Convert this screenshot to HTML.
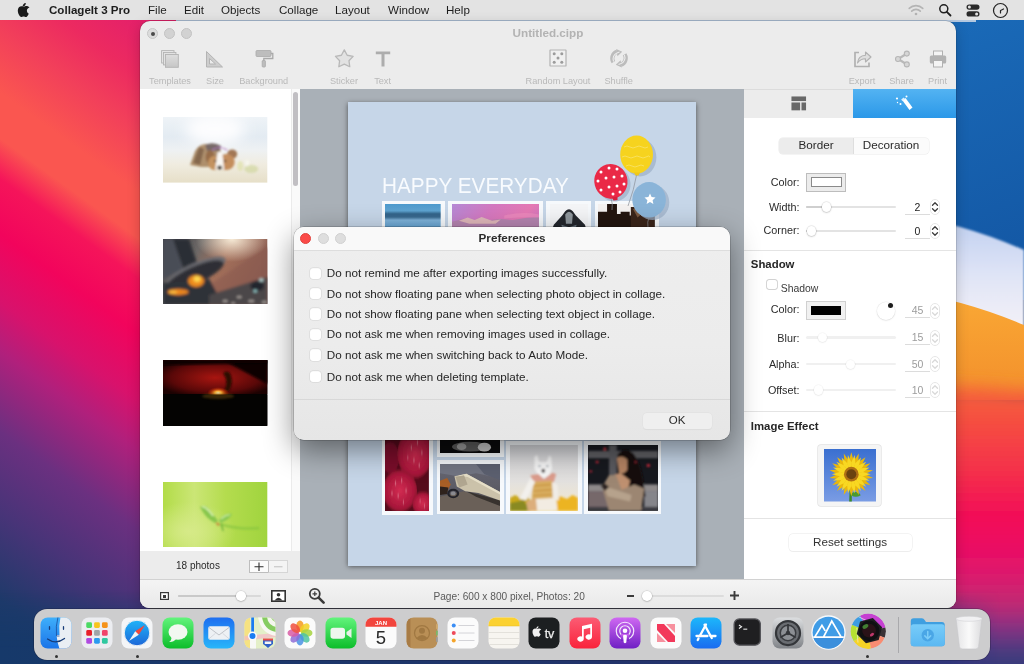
<!DOCTYPE html>
<html><head><meta charset="utf-8">
<style>
*{box-sizing:border-box;margin:0;padding:0}
html,body{width:1024px;height:664px;overflow:hidden}
body{font-family:"Liberation Sans",sans-serif;position:relative;background:#c02a6a;color:#222}
.abs{position:absolute}
#wall{position:absolute;left:0;top:0;width:1024px;height:664px}
#menubar{position:absolute;left:0;top:0;width:1024px;height:20px;background:#e3e3e3}
#menubar span{position:absolute;top:3px;font-size:11.6px;color:#1d1d1d;white-space:nowrap;line-height:14px}
#win{position:absolute;left:140px;top:21px;width:816px;height:587px;border-radius:10px 10px 9px 9px;background:#ececec;overflow:hidden;box-shadow:0 0 0 0.5px rgba(0,0,0,.22),0 4px 14px rgba(0,0,0,.2)}
.tl{position:absolute;width:11px;height:11px;border-radius:50%;background:#d2d2d2;border:0.5px solid #c2c2c2}
.tbl{position:absolute;top:53.5px;font-size:9.2px;color:#b9b9b9;white-space:nowrap;transform:translateX(-50%);line-height:12px}
.tbi{position:absolute}
#left{position:absolute;left:0;top:68px;width:160px;height:462px;background:#fff}
#canvas{position:absolute;left:160px;top:68px;width:444px;height:490px;background:#a9b0b7}
#page{position:absolute;left:48px;top:13px;width:348px;height:464px;background:#c6d6e8;box-shadow:0 0.5px 5px rgba(0,0,0,.55)}
.ph{position:absolute;background:#fff;border:3px solid #fff;overflow:hidden}
#right{position:absolute;left:604px;top:68px;width:212px;height:490px;background:#fff}
.lbl{position:absolute;font-size:11px;color:#2a2a2a;white-space:nowrap;line-height:14px}
.track{position:absolute;height:2.4px;margin-top:.3px;border-radius:2px;background:#e3e3e3}
.knob{position:absolute;width:9.400px;height:9.400px;margin:.8px;border-radius:50%;background:#fff;box-shadow:0 0 0 0.5px rgba(0,0,0,.09),0 0.5px 1.800px rgba(0,0,0,.26)}
.sep{position:absolute;left:0;width:212px;height:1px;background:#e4e4e4}
.num{position:absolute;width:25px;height:15px;font-size:10.5px;text-align:center;line-height:15px;border-bottom:1px solid #dcdcdc;color:#222;background:transparent}
.num.dis{color:#9c9c9c}
#dock{position:absolute;left:34px;top:609px;width:956px;height:51px;border-radius:13px;background:#cdcdce;box-shadow:0 0 0 0.6px rgba(20,20,40,.45)}
.di{position:absolute;top:7px;width:32px;height:32px;border-radius:7.5px;overflow:hidden}
.dot{position:absolute;top:45.5px;width:3px;height:3px;border-radius:50%;background:#333}
#dlg{position:absolute;left:294px;top:226.500px;width:436px;height:213px;border-radius:10px;background:linear-gradient(#eeeeee,#ececec 55%,#e6e6e6);overflow:hidden;box-shadow:0 0 0 0.5px rgba(0,0,0,.3),0 10px 30px rgba(0,0,0,.45)}
.cb{position:absolute;left:15.5px;width:11.5px;height:11.5px;border-radius:3px;background:#fff;box-shadow:0 0 0 0.5px rgba(0,0,0,.11),inset 0 0.5px 1px rgba(0,0,0,.05)}
.ct{position:absolute;left:32.8px;font-size:11.7px;color:#262626;white-space:nowrap;line-height:14px}
#menubar,#win,#dlg,#dock{opacity:.999}
</style></head><body>
<svg id="wall" viewBox="0 0 1024 664" preserveAspectRatio="none">
<defs>
<linearGradient id="wl" gradientUnits="userSpaceOnUse" x1="38.6" y1="-53.5" x2="-316" y2="438"><stop offset="0.000" stop-color="#e4206a"/><stop offset="0.076" stop-color="#ec2a60"/><stop offset="0.150" stop-color="#f2405a"/><stop offset="0.233" stop-color="#fa5650"/><stop offset="0.294" stop-color="#fa5650"/><stop offset="0.348" stop-color="#f5145a"/><stop offset="0.422" stop-color="#f2045c"/><stop offset="0.513" stop-color="#d8126c"/><stop offset="0.579" stop-color="#b0207c"/><stop offset="0.686" stop-color="#6b3080"/><stop offset="0.794" stop-color="#483478"/><stop offset="0.911" stop-color="#1f3a6a"/><stop offset="1.000" stop-color="#173966"/></linearGradient>
<filter id="b8"><feGaussianBlur stdDeviation="8"/></filter>
<filter id="b3"><feGaussianBlur stdDeviation="3"/></filter><filter id="b1"><feGaussianBlur stdDeviation=".8"/></filter>
</defs>
<rect width="1024" height="664" fill="#1b3a68"/>
<rect x="0" y="0" width="520" height="664" fill="url(#wl)"/>
<g id="wr">
<linearGradient id="wrb" gradientUnits="userSpaceOnUse" x1="940" y1="20" x2="1024" y2="240"><stop offset="0" stop-color="#1a6ab8"/><stop offset="1" stop-color="#1459a6"/></linearGradient>
<linearGradient id="wrw" gradientUnits="userSpaceOnUse" x1="0" y1="225" x2="0" y2="325"><stop offset="0" stop-color="#c3d2f1"/><stop offset=".5" stop-color="#dfe4f6"/><stop offset="1" stop-color="#f2f0f8"/></linearGradient>
<linearGradient id="wro" gradientUnits="userSpaceOnUse" x1="0" y1="300" x2="0" y2="395"><stop offset="0" stop-color="#f9a734"/><stop offset="1" stop-color="#f3902c"/></linearGradient>
<linearGradient id="wrr" gradientUnits="userSpaceOnUse" x1="0" y1="388" x2="0" y2="664"><stop offset="0" stop-color="#f5623a"/><stop offset=".3" stop-color="#f4304a"/><stop offset=".5" stop-color="#f2055a"/><stop offset=".66" stop-color="#e0166c"/><stop offset=".78" stop-color="#c22a72"/><stop offset=".86" stop-color="#8c3082"/><stop offset=".94" stop-color="#503a80"/><stop offset="1" stop-color="#363a7a"/></linearGradient>
<rect x="900" y="0" width="124" height="300" fill="url(#wrb)"/>
<path d="M900 215 Q960 222 1024 250 L1024 340 L900 340Z" fill="url(#wrw)" filter="url(#b1)"/>
<path d="M900 290 Q965 300 1024 325 L1024 400 L900 400Z" fill="url(#wro)"/>
<path d="M880 386 Q965 384 1060 394 L1060 700 L880 700Z" fill="url(#wrr)" filter="url(#b8)"/>
</g>
<linearGradient id="nv" gradientUnits="userSpaceOnUse" x1="0" y1="590" x2="0" y2="648"><stop offset="0" stop-color="#fff" stop-opacity="0"/><stop offset="1" stop-color="#fff"/></linearGradient><linearGradient id="nvh" gradientUnits="userSpaceOnUse" x1="0" y1="0" x2="1024" y2="0"><stop offset="0" stop-color="#16396a"/><stop offset=".6" stop-color="#22336a"/><stop offset=".93" stop-color="#30357a"/><stop offset="1" stop-color="#3c3a80"/></linearGradient><linearGradient id="nvk" gradientUnits="userSpaceOnUse" x1="950" y1="0" x2="1000" y2="0"><stop offset="0" stop-color="#000" stop-opacity="0"/><stop offset="1" stop-color="#000" stop-opacity="1"/></linearGradient><mask id="nvm"><rect x="0" y="590" width="1024" height="80" fill="url(#nv)"/><rect x="950" y="590" width="74" height="80" fill="url(#nvk)"/></mask>
<rect x="0" y="590" width="1024" height="74" fill="url(#nvh)" mask="url(#nvm)"/><rect x="150" y="604" width="800" height="8" fill="#4a4a50"/><rect x="176" y="19" width="800" height="3" fill="#b4c8e0"/>
</svg>
<div id="menubar">
<svg class="abs" style="left:17px;top:3px" width="13" height="15" viewBox="0 0 170 200"><path fill="#1a1a1a" d="M150 68c-1 1-20 11-20 35 0 27 24 37 25 37 0 1-4 13-12 25-8 11-16 22-28 22s-15-7-29-7c-14 0-19 7-30 7s-19-10-28-23C18 149 9 124 9 100c0-38 25-58 49-58 13 0 24 8 32 8 8 0 20-9 35-9 6 0 26 1 40 20zM105 32c6-7 10-17 10-27 0-1 0-3-1-4-10 0-22 7-29 15-6 6-11 16-11 26 0 2 0 3 1 4h3c9 0 20-6 27-14z"/></svg>
<span style="left:49px;font-weight:700">CollageIt 3 Pro</span>
<span style="left:148px">File</span><span style="left:184px">Edit</span><span style="left:221px">Objects</span><span style="left:279px">Collage</span><span style="left:335px">Layout</span><span style="left:388px">Window</span><span style="left:446px">Help</span>
<svg class="abs" style="left:907px;top:3px" width="18" height="14" viewBox="0 0 18 14"><g fill="none" stroke="#b4b4b4" stroke-width="1.6" stroke-linecap="round"><path d="M2.200 5.400a9.600 9.600 0 0 1 13.600 0"/><path d="M4.700 8.100a6.100 6.100 0 0 1 8.600 0"/></g><circle cx="9" cy="11" r="1.300" fill="#b4b4b4"/></svg>
<svg class="abs" style="left:938px;top:3px" width="14" height="14" viewBox="0 0 14 14"><circle cx="5.800" cy="5.800" r="4" fill="none" stroke="#1f1f1f" stroke-width="1.500"/><path d="M8.800 8.800l3.700 3.700" stroke="#1f1f1f" stroke-width="1.800" stroke-linecap="round"/></svg>
<svg class="abs" style="left:966px;top:4px" width="14" height="13" viewBox="0 0 14 13"><rect x=".5" y=".5" width="13" height="5.200" rx="2.600" fill="#2a2a2a"/><circle cx="3.400" cy="3.100" r="1.500" fill="#e3e3e3"/><rect x=".5" y="7.300" width="13" height="5.200" rx="2.600" fill="#2a2a2a"/><circle cx="10.600" cy="9.900" r="1.500" fill="#e3e3e3"/></svg>
<svg class="abs" style="left:992px;top:2px" width="17" height="17" viewBox="0 0 17 17"><circle cx="8.500" cy="8.500" r="7" fill="none" stroke="#222" stroke-width="1.200"/><path d="M8.500 11V8.500l3-1.500" fill="none" stroke="#222" stroke-width="1.200" stroke-linecap="round"/></svg>
</div>
<div id="win">

<div class="tl" style="left:6.5px;top:6.500px;background:#dcdcdc;border-color:#c6c6c6"><div class="abs" style="left:3px;top:3px;width:4px;height:4px;border-radius:50%;background:#4a4a4a"></div></div>
<div class="tl" style="left:23.5px;top:6.500px"></div>
<div class="tl" style="left:40.500px;top:6.500px"></div>
<div class="abs" style="left:0;top:5px;width:816px;text-align:center;font-size:11.7px;font-weight:700;color:#b3b3b3;line-height:14px">Untitled.cipp</div>
<!-- templates -->
<svg class="tbi" style="left:21px;top:28.500px" width="18" height="18" viewBox="0 0 18 18"><defs><linearGradient id="tpg" x1="0" y1="0" x2="0" y2="1"><stop offset="0" stop-color="#dedede"/><stop offset="1" stop-color="#c6c6c6"/></linearGradient></defs><g stroke="#b3b3b3" stroke-width=".9"><rect x=".6" y=".6" width="12.400" height="12.400" fill="#e6e6e6"/><rect x="2.500" y="2.500" width="12.400" height="12.400" fill="#e2e2e2"/><rect x="4.500" y="4.500" width="12.800" height="12.800" fill="url(#tpg)"/></g></svg>
<!-- size -->
<svg class="tbi" style="left:65px;top:29px" width="19" height="18" viewBox="0 0 19 18"><path d="M1.500 1.500 L17.500 17 L1.500 17Z M4.500 8.500 L4.500 14 L10.500 14Z" fill="#cdcdcd" fill-rule="evenodd" stroke="#b3b3b3" stroke-width="1" stroke-linejoin="round"/></svg>
<!-- background roller -->
<svg class="tbi" style="left:115px;top:28px" width="19" height="19" viewBox="0 0 19 19"><g fill="#bdbdbd" stroke="#a9a9a9" stroke-width=".8"><rect x="1" y="1.500" width="15" height="6" rx="1"/><path d="M16 4.500h1.800v5h-9v2.500" fill="none" stroke-width="1.300"/><rect x="7.200" y="11.500" width="3.200" height="6.500" rx=".8"/></g></svg>
<!-- sticker star -->
<svg class="tbi" style="left:193.500px;top:26.500px" width="21" height="21" viewBox="0 0 21 21"><path d="M10.30 1.90 L13.18 7.24 L19.14 8.33 L14.96 12.71 L15.77 18.72 L10.30 16.10 L4.83 18.72 L5.64 12.71 L1.46 8.33 L7.42 7.24Z" fill="#e2e2e2" stroke="#b8b8b8" stroke-width="1.300" stroke-linejoin="round"/></svg>
<!-- text T -->
<svg class="tbi" style="left:235px;top:29.500px" width="16" height="17" viewBox="0 0 16 17"><path d="M.8.500h14.400v2.700H9.500V15.500H6.500V3.200H.8z" fill="#adadad"/></svg>
<!-- random layout dice -->
<svg class="tbi" style="left:408.800px;top:28px" width="18" height="18" viewBox="0 0 18 18"><rect x="1" y="1" width="16" height="16" rx=".3" fill="#f0f0f0" stroke="#b3b3b3" stroke-width="1.200"/><g fill="#9c9c9c"><circle cx="5.200" cy="4.800" r="1.500"/><circle cx="12.800" cy="4.800" r="1.500"/><circle cx="9" cy="9" r="1.500"/><circle cx="5.200" cy="13.200" r="1.500"/><circle cx="12.800" cy="13.200" r="1.500"/></g></svg>
<!-- shuffle -->
<svg class="tbi" style="left:469.500px;top:28px" width="18" height="18.500" viewBox="0 0 18 18.500"><g fill="none" stroke="#bcbcbc" stroke-width="4.200"><path d="M3.400 13.200a6.300 6.800 0 0 1 3.600 -10.400"/><path d="M14.600 5.300a6.300 6.800 0 0 1 -3.600 10.400"/></g><path d="M6.200 0l6 2.800-4.800 4.400z" fill="#bcbcbc"/><path d="M11.800 18.500l-6-2.800 4.800-4.400z" fill="#bcbcbc"/><g fill="none" stroke="#ececec" stroke-width="1.100"><path d="M3.600 12.500a5.800 6.300 0 0 1 3.400 -8.600l2.500-.8"/><path d="M14.400 6a5.800 6.300 0 0 1 -3.400 8.600l-2.500.8"/></g></svg>
<!-- export -->
<svg class="tbi" style="left:713px;top:29px" width="19" height="18" viewBox="0 0 19 18"><path d="M6 2.500H2v14h14v-4" fill="none" stroke="#b1b1b1" stroke-width="1.700"/><path d="M4.500 13c.5-5 3.500-7.500 8-7.700V2l5.500 5-5.500 5V8.700c-3.500 0-6 1.200-8 4.300z" fill="#dedede" stroke="#b1b1b1" stroke-width="1.100" stroke-linejoin="round"/></svg>
<!-- share -->
<svg class="tbi" style="left:754px;top:29px" width="17" height="18" viewBox="0 0 17 18"><g stroke="#b9b9b9" stroke-width="2.200" fill="none"><path d="M12.500 3.800L4.200 9l8.300 5.200"/></g><g fill="#d6d6d6" stroke="#b6b6b6" stroke-width="1.100"><circle cx="12.800" cy="3.600" r="2.500"/><circle cx="4" cy="9" r="2.500"/><circle cx="12.800" cy="14.400" r="2.500"/></g></svg>
<!-- print -->
<svg class="tbi" style="left:788.500px;top:29px" width="18" height="18" viewBox="0 0 18 18"><rect x="4.500" y="1" width="9" height="5" fill="#f4f4f4" stroke="#b0b0b0" stroke-width="1"/><rect x=".8" y="5.500" width="16.400" height="8" rx="1.500" fill="#b2b2b2"/><rect x="4.500" y="10.500" width="9" height="6.500" fill="#f4f4f4" stroke="#b0b0b0" stroke-width="1"/></svg>
<div class="tbl" style="left:30px">Templates</div><div class="tbl" style="left:75px">Size</div><div class="tbl" style="left:123.7px">Background</div><div class="tbl" style="left:204px">Sticker</div><div class="tbl" style="left:242.6px">Text</div><div class="tbl" style="left:418px">Random Layout</div><div class="tbl" style="left:478.7px">Shuffle</div><div class="tbl" style="left:722px">Export</div><div class="tbl" style="left:761.5px">Share</div><div class="tbl" style="left:797.5px">Print</div>
<div id="left">
<svg class="abs" style="left:23.300px;top:28.200px" width="104.300" height="65.600" viewBox="0 0 104 65.600" preserveAspectRatio="none">
<defs><linearGradient id="t1" x1="0" y1="0" x2="0" y2="1"><stop offset="0" stop-color="#eef3f7"/><stop offset=".3" stop-color="#e3ebf2"/><stop offset=".5" stop-color="#eef1f3"/><stop offset=".72" stop-color="#f0ece0"/><stop offset="1" stop-color="#e6dfc8"/></linearGradient><filter id="f1" x="-20%" y="-20%" width="140%" height="140%"><feGaussianBlur stdDeviation="1.100"/></filter><filter id="f1b" x="-50%" y="-50%" width="200%" height="200%"><feGaussianBlur stdDeviation="7"/></filter></defs>
<rect width="104" height="65.600" fill="url(#t1)"/>
<ellipse cx="52" cy="12" rx="30" ry="16" fill="#fdfdfe" filter="url(#f1b)"/><g filter="url(#f1)" opacity=".9"><path d="M27 48 L32 34 Q36 27 43 27 L56 30 L60 40 L56 50 L38 50Z" fill="#a88660"/><path d="M30 46 L36 30 L41 32 L37 48Z" fill="#7a5a3c"/><path d="M42 28 Q50 24 58 29 L56 34 L44 34Z" fill="#6a5a58"/><ellipse cx="47" cy="40" rx="4.500" ry="7" fill="#8d5e38"/><ellipse cx="69" cy="37" rx="5" ry="4.500" fill="#9a6a44"/><ellipse cx="63" cy="45" rx="8.500" ry="8" fill="#c08450"/><ellipse cx="51" cy="46" rx="6" ry="7" fill="#c08a52"/><path d="M54.500 35 L59 35 L61 52 L52 52Z" fill="#faf8f4"/><ellipse cx="56.500" cy="50.500" rx="2.600" ry="2" fill="#3a302c"/><ellipse cx="52" cy="44" rx="1.200" ry="1" fill="#3a2a20"/><ellipse cx="62" cy="44" rx="1.200" ry="1" fill="#3a2a20"/><path d="M49 33 Q56 28 64 33" fill="none" stroke="#b070b8" stroke-width="1.200"/><ellipse cx="88" cy="52" rx="7" ry="4" fill="#cfd69a" opacity=".7"/><ellipse cx="77" cy="49" rx="3" ry="5" fill="#dde0a4" opacity=".7"/><ellipse cx="84" cy="46" rx="2" ry="3" fill="#f8f8f0" opacity=".9"/></g>
</svg>
<svg class="abs" style="left:23.300px;top:149.500px" width="104.300" height="65.600" viewBox="0 0 104 65.600" preserveAspectRatio="none">
<defs><linearGradient id="t2" x1="0" y1="0" x2="1" y2=".35"><stop offset="0" stop-color="#3d4048"/><stop offset=".35" stop-color="#6d6866"/><stop offset=".6" stop-color="#a4705a"/><stop offset="1" stop-color="#8a5c52"/></linearGradient><filter id="f2" x="-20%" y="-20%" width="140%" height="140%"><feGaussianBlur stdDeviation="1.600"/></filter><radialGradient id="t2s" cx=".66" cy="0" r=".35"><stop offset="0" stop-color="#f6ead6"/><stop offset="1" stop-color="#f6ead6" stop-opacity="0"/></radialGradient></defs>
<rect width="104" height="65.600" fill="url(#t2)"/><rect width="104" height="65.600" fill="url(#t2s)"/>
<g filter="url(#f2)"><path d="M104 8 L40 50 L60 66 L104 40Z" fill="#8c5a50" opacity=".6"/><path d="M9 0 L26 0 L36 30 L22 34Z" fill="#2b2d35"/><path d="M0 0 L10 0 L20 30 L0 40Z" fill="#4a4d57"/><ellipse cx="33" cy="33" rx="32" ry="9" fill="#6c6c72" transform="rotate(-24 33 33)"/><ellipse cx="32" cy="36" rx="31" ry="8.500" fill="#2e2f35" transform="rotate(-24 32 36)"/><path d="M0 44 L46 40 L60 66 L0 66Z" fill="#2f3037"/><path d="M46 56 L104 38 L104 66 L46 66Z" fill="#4b4648"/><ellipse cx="33" cy="42" rx="8" ry="6" fill="#ee8c1c"/><ellipse cx="34" cy="40" rx="3.500" ry="3" fill="#ffd850"/><ellipse cx="15" cy="53" rx="10.500" ry="3" fill="#ec861e"/><ellipse cx="10" cy="53" rx="4" ry="1.600" fill="#ffc040"/><ellipse cx="94" cy="47" rx="7" ry="5" fill="#23272d"/><ellipse cx="98" cy="41" rx="2" ry="1.500" fill="#c8f0f0"/><ellipse cx="92" cy="52" rx="1.600" ry="1.200" fill="#a8e8e8"/></g>
<g filter="url(#f1)" fill="#9a938e" opacity=".75"><ellipse cx="62" cy="62" rx="3" ry="2"/><ellipse cx="76" cy="58" rx="3" ry="2"/><ellipse cx="88" cy="62" rx="3.500" ry="2"/><ellipse cx="101" cy="63" rx="3" ry="2"/><ellipse cx="70" cy="64" rx="2.500" ry="1.500"/></g>
</svg>
<svg class="abs" style="left:23.300px;top:271px" width="104.300" height="65.600" viewBox="0 0 104 65.600" preserveAspectRatio="none">
<defs><radialGradient id="t3" cx=".5" cy=".52" r=".6"><stop offset="0" stop-color="#a81510"/><stop offset=".3" stop-color="#86100d"/><stop offset=".7" stop-color="#5a0808"/><stop offset="1" stop-color="#1c0202"/></radialGradient><radialGradient id="t3s" cx=".5" cy=".5" r=".5"><stop offset="0" stop-color="#fff6c0"/><stop offset=".3" stop-color="#ffb43a"/><stop offset=".65" stop-color="#e0500a" stop-opacity=".55"/><stop offset="1" stop-color="#c02000" stop-opacity="0"/></radialGradient><filter id="f3" x="-20%" y="-20%" width="140%" height="140%"><feGaussianBlur stdDeviation="1.200"/></filter></defs>
<rect width="104" height="65.600" fill="#050303"/><rect width="104" height="34" fill="url(#t3)"/>
<path d="M60 0 L104 0 L104 24Z" fill="#0a0101" filter="url(#f3)"/><path d="M0 0 L104 0 L104 3 L0 5Z" fill="#0a0101" filter="url(#f3)"/>
<path d="M60 13 Q66 9 68 16 Q70 24 66 31 L61 31 Q66 22 60 13Z" fill="#2a0a05" filter="url(#f3)"/>
<ellipse cx="55" cy="33" rx="11" ry="6" fill="url(#t3s)"/>
<rect y="34.500" width="104" height="32" fill="#040302"/><ellipse cx="55" cy="36" rx="16" ry="3" fill="#6a4a10" opacity=".5" filter="url(#f3)"/>
</svg>
<svg class="abs" style="left:23.300px;top:392.500px" width="104.300" height="65.600" viewBox="0 0 104 65.600" preserveAspectRatio="none">
<defs><linearGradient id="t4" x1="0" y1="0" x2="1" y2="0"><stop offset="0" stop-color="#b2dc48"/><stop offset=".3" stop-color="#cbe676"/><stop offset=".6" stop-color="#b4dc4e"/><stop offset="1" stop-color="#a0d43e"/></linearGradient><filter id="f4" x="-20%" y="-20%" width="140%" height="140%"><feGaussianBlur stdDeviation=".800"/></filter><radialGradient id="t4b" cx=".25" cy=".75" r=".45"><stop offset="0" stop-color="#d6ea88"/><stop offset="1" stop-color="#d6ea88" stop-opacity="0"/></radialGradient></defs>
<rect width="104" height="65.600" fill="url(#t4)"/><rect width="104" height="65.600" fill="url(#t4b)"/>
<g filter="url(#f4)"><path d="M37 25 Q42 22 46 27 L55 39 L52 41 Q42 36 37 25Z" fill="#86c64c"/><path d="M39 25 Q43 24 50 34" stroke="#d8f2b0" stroke-width="1.800" fill="none"/><path d="M56 38 Q62 30 69 32 Q66 38 57 41Z" fill="#88c850"/><path d="M58 37 Q63 32 67 33" stroke="#d0eea8" stroke-width="1.200" fill="none"/><path d="M52 40 L57 42 L55 44Z" fill="#c87838"/><path d="M57 42 Q75 48 96 46" stroke="#86c440" stroke-width="2.500" fill="none" opacity=".7"/><path d="M58 42 L60 49" stroke="#62aa34" stroke-width="1.200"/></g>
</svg>
<div class="abs" style="left:151px;top:0;width:9px;height:462px;background:#fafafa;border-left:1px solid #ebebeb"></div>
<div class="abs" style="left:152.800px;top:2.500px;width:5px;height:94px;border-radius:3px;background:#c1bfc3"></div>
</div>
<div class="abs" style="left:0;top:530px;width:160px;height:28px;background:#ececec"></div>
<div class="lbl" style="left:36px;top:538px;font-size:10px;color:#2a2a2a">18 photos</div>
<div class="abs" style="left:108.500px;top:538.500px;width:20px;height:13.500px;background:#fbfbfb;border:1px solid #bdbdbd"></div>
<div class="abs" style="left:127.500px;top:538.500px;width:20px;height:13.500px;background:#f4f4f4;border:1px solid #d6d6d6;border-left:1px solid #bdbdbd"></div>
<svg class="abs" style="left:108.500px;top:538.500px" width="39" height="13.500" viewBox="0 0 39 13.500"><path d="M5.500 6.750h9M10 2.500v8.500" stroke="#2d2d2d" stroke-width="1.100"/><path d="M25 6.750h8.500" stroke="#c4c4c4" stroke-width="1.100"/></svg>
 <div id="canvas"><div id="page"><div class="abs" style="left:33.700px;top:71.500px;font-size:21.300px;line-height:24px;color:#f8fbfe;white-space:nowrap;transform:scaleX(.974);transform-origin:0 0">HAPPY EVERYDAY</div><div class="abs" style="left:33.5px;top:98.6px;width:63.1px;height:59.4px;background:#f6f9fc"><svg class="abs" style="left:3.7px;top:3.7px" width="55.7" height="52.0" viewBox="0 0 100 100" preserveAspectRatio="none"><defs><linearGradient id="g1" x1="0" y1="0" x2="0" y2="1"><stop offset="0" stop-color="#4d9acd"/><stop offset=".13" stop-color="#5ea4d2"/><stop offset=".19" stop-color="#33648a"/><stop offset=".25" stop-color="#39698f"/><stop offset=".31" stop-color="#7fb3da"/><stop offset=".42" stop-color="#6aa6d3"/><stop offset=".5" stop-color="#41749c"/><stop offset=".6" stop-color="#5d9ccb"/><stop offset="1" stop-color="#3c7fb5"/></linearGradient></defs><rect width="100" height="100" fill="url(#g1)"/></svg></div><div class="abs" style="left:100.2px;top:98.6px;width:94.5px;height:59.4px;background:#f6f9fc"><svg class="abs" style="left:3.7px;top:3.7px" width="87.1" height="52.0" viewBox="0 0 100 100" preserveAspectRatio="none"><defs><linearGradient id="g2" x1="0" y1="0" x2="1" y2=".5"><stop offset="0" stop-color="#b58ad6"/><stop offset=".4" stop-color="#d478c0"/><stop offset=".75" stop-color="#e579b4"/><stop offset="1" stop-color="#c774c4"/></linearGradient></defs><rect width="100" height="100" fill="url(#g2)"/><path d="M0 34 L10 30 L18 27 L26 31 L34 26 L44 31 L56 29 L70 31 L84 27 L100 25 L100 100 L0 100Z" fill="#b584b0"/><path d="M8 32 L18 26 L26 31 L34 25 L46 32 L56 30 L50 38 L20 38Z" fill="#e6c0bc" opacity=".85"/><path d="M60 22 Q80 14 100 20 L100 26 Q80 24 60 28Z" fill="#f090c0" opacity=".6"/></svg></div><div class="abs" style="left:197.9px;top:98.6px;width:45.4px;height:59.4px;background:#f6f9fc"><svg class="abs" style="left:3.7px;top:3.7px" width="38.0" height="52.0" viewBox="0 0 100 100" preserveAspectRatio="none"><rect width="100" height="100" fill="#f4f5f7"/><path d="M10 40 L32 22 L40 14 Q50 6 60 14 L68 22 L92 40 L100 60 L100 100 L0 100 L0 60Z" fill="#23262c"/><path d="M40 20 Q50 10 60 20 L58 38 L42 38Z" fill="#8e969c"/><path d="M30 40 L48 44 L40 70Z M70 40 L52 44 L60 70Z" fill="#6a7680"/></svg></div><div class="abs" style="left:246.7px;top:98.6px;width:64.0px;height:59.4px;background:#f6f9fc"><svg class="abs" style="left:3.7px;top:3.7px" width="56.6" height="52.0" viewBox="0 0 100 100" preserveAspectRatio="none"><rect width="100" height="100" fill="#f4f1f0"/><path d="M0 15 L16 15 L16 0 L33.500 0 L33.500 19 L40 19 L40 15 L56 15 L56 22 L100 22 L100 100 L0 100Z" fill="#23150f"/><path d="M58 6 L100 6 L100 100 L58 100Z" fill="#3a2419"/><path d="M62 10 L74 4 L80 16 L70 26Z" fill="#8a6448" opacity=".8"/><path d="M84 0 L86 0 L78 22 L76 22Z" fill="#d8d0c8" opacity=".7"/></svg></div><div class="abs" style="left:33.7px;top:278.0px;width:51.3px;height:134.5px;background:#f6f9fc"><svg class="abs" style="left:3.7px;top:3.7px" width="43.9" height="127.1" viewBox="0 0 100 100" preserveAspectRatio="none"><defs><radialGradient id="g5" cx=".5" cy=".5" r=".6"><stop offset="0" stop-color="#d22c52"/><stop offset=".7" stop-color="#a8163a"/><stop offset="1" stop-color="#6e0e22"/></radialGradient></defs><rect width="100" height="100" fill="#560b1b"/><g filter="url(#pbl)"><ellipse cx="12" cy="58" rx="20" ry="12" fill="#7a1029"/><ellipse cx="68" cy="55" rx="40" ry="19" fill="url(#g5)"/><ellipse cx="34" cy="84" rx="39" ry="16.500" fill="url(#g5)"/><ellipse cx="86" cy="94" rx="24" ry="9" fill="url(#g5)"/><g fill="#e88aa0" opacity=".75"><circle cx="60" cy="50" r="1.500"/><circle cx="74" cy="46" r="1.500"/><circle cx="84" cy="54" r="1.500"/><circle cx="66" cy="60" r="1.500"/><circle cx="52" cy="58" r="1.300"/><circle cx="78" cy="64" r="1.500"/><circle cx="24" cy="78" r="1.500"/><circle cx="38" cy="76" r="1.500"/><circle cx="48" cy="84" r="1.500"/><circle cx="30" cy="88" r="1.500"/><circle cx="16" cy="86" r="1.500"/><circle cx="42" cy="93" r="1.300"/><circle cx="80" cy="92" r="1.300"/><circle cx="90" cy="96" r="1.300"/></g></g></svg></div><div class="abs" style="left:88.5px;top:298.0px;width:67.4px;height:57.0px;background:#f6f9fc"><svg class="abs" style="left:3.7px;top:3.7px" width="60.0" height="49.6" viewBox="0 0 100 100" preserveAspectRatio="none"><rect width="100" height="100" fill="#0b0b0c"/><g filter="url(#pbl)"><ellipse cx="50" cy="86" rx="30" ry="10" fill="#5a5a5a"/><ellipse cx="36" cy="86" rx="8" ry="7" fill="#9a9a9a"/><ellipse cx="74" cy="87" rx="11" ry="9" fill="#c4c4c4"/></g></svg></div><div class="abs" style="left:88.5px;top:358.3px;width:67.4px;height:54.2px;background:#f6f9fc"><svg class="abs" style="left:3.7px;top:3.7px" width="60.0" height="46.8" viewBox="0 0 100 100" preserveAspectRatio="none"><defs><linearGradient id="g7" x1="0" y1="0" x2="0" y2="1"><stop offset="0" stop-color="#6a6a76"/><stop offset=".55" stop-color="#5a5a64"/><stop offset="1" stop-color="#4c4238"/></linearGradient></defs><rect width="100" height="100" fill="url(#g7)"/><g filter="url(#pbl)"><path d="M0 0 L100 0 L100 30 L60 20 L30 26 L0 20Z" fill="#727583"/><path d="M60 0 L100 0 L100 34 L74 22Z" fill="#5c6070"/><path d="M0 70 L40 58 L100 84 L100 100 L0 100Z" fill="#6b6158"/><path d="M44 58 L100 78 L100 90 L60 70Z" fill="#37332f"/><path d="M24 26 L44 21 L100 60 L100 78 L64 62 L42 58 L28 48Z" fill="#cbc2aa"/><path d="M30 25 L44 21 L100 60 L100 65 L46 28Z" fill="#e6dfc8"/><path d="M26 28 L40 24 L46 44 L32 50Z" fill="#b0a690"/><path d="M0 36 L12 30 L18 44 L12 58 L0 60Z" fill="#a85e28"/><path d="M0 48 L14 50 L12 64 L0 66Z" fill="#2e241e"/><circle cx="22" cy="63" r="8" fill="none" stroke="#23232a" stroke-width="4"/><circle cx="22" cy="63" r="4" fill="#8a8a90"/></g></svg></div><div class="abs" style="left:158.3px;top:339.3px;width:75.3px;height:73.2px;background:#f6f9fc"><svg class="abs" style="left:3.7px;top:3.7px" width="67.9" height="65.8" viewBox="0 0 100 100" preserveAspectRatio="none"><defs><linearGradient id="g8" x1="0" y1="0" x2="0" y2="1"><stop offset="0" stop-color="#d2d3d7"/><stop offset=".55" stop-color="#e3e1df"/><stop offset=".8" stop-color="#ece5d4"/><stop offset="1" stop-color="#f0dca0"/></linearGradient><filter id="pbl" x="-10%" y="-10%" width="120%" height="120%"><feGaussianBlur stdDeviation="1.300"/></filter></defs><rect width="100" height="100" fill="url(#g8)"/><g filter="url(#pbl)"><path d="M0 80 L8 76 L16 82 L24 78 L30 84 L30 100 L0 100Z" fill="#c9a81e"/><path d="M0 88 L20 84 L30 100 L0 100Z" fill="#8a8a20"/><path d="M64 84 L74 78 L84 82 L92 76 L100 80 L100 100 L64 100Z" fill="#ecb422"/><path d="M36 18 L40 15 L43 26 L54 26 L58 15 L61 20 L62 36 L58 46 L50 50 L42 46 L36 36Z" fill="#f7f7f7"/><ellipse cx="49" cy="39" rx="2.600" ry="3" fill="#3a3030"/><circle cx="43.500" cy="32" r="1.300" fill="#5a6a7a"/><circle cx="55" cy="32" r="1.300" fill="#5a6a7a"/><path d="M30 46 L42 44 L50 52 L62 42 L68 44 L64 58 L36 60Z" fill="#dc9c8c"/><path d="M34 56 L62 54 L63 82 L32 84Z" fill="#d9ae60"/><path d="M36 62 L60 60 M35 70 L62 68 M34 77 L62 75" stroke="#c89440" stroke-width="2"/><path d="M30 50 L37 56 L24 84 L14 82Z" fill="#f2f0ec"/><path d="M62 56 L70 60 L72 84 L64 84Z" fill="#f0ece6"/><path d="M38 82 L68 80 L70 100 L38 100Z" fill="#f2ece2"/><path d="M24 86 L38 80 L40 100 L26 100Z" fill="#dcae7c"/></g></svg></div><div class="abs" style="left:235.9px;top:339.3px;width:77.6px;height:73.2px;background:#f6f9fc"><svg class="abs" style="left:3.7px;top:3.7px" width="70.2" height="65.8" viewBox="0 0 100 100" preserveAspectRatio="none"><rect width="100" height="100" fill="#17191f"/><g filter="url(#pbl)"><rect x="0" y="9" width="100" height="11" fill="#5f5f63"/><rect x="30" y="0" width="11" height="62" fill="#5a5a5e"/><rect x="0" y="60" width="100" height="10" fill="#8e8a8a"/><rect x="0" y="70" width="30" height="30" fill="#76686a"/><rect x="80" y="70" width="20" height="30" fill="#85858a"/><rect x="0" y="94" width="100" height="6" fill="#3a3a40"/><path d="M42 14 Q52 2 64 12 Q74 24 78 50 L82 78 L70 84 L44 60Z" fill="#17110f"/><path d="M41 20 Q48 14 56 22 L56 38 Q50 46 44 42Z" fill="#b48464"/><path d="M36 46 L46 42 L60 54 L56 72 L42 68Z" fill="#bf9070"/><path d="M20 64 L30 46 L40 46 L48 68 L66 60 L80 66 L76 100 L30 100Z" fill="#9c8672"/><path d="M22 62 L62 76 L60 86 L28 78Z" fill="#b6a28c"/><path d="M18 62 L24 58 L30 64 L24 70Z" fill="#2a2422"/><circle cx="24" cy="6" r="2.200" fill="#d83440"/><circle cx="13" cy="26" r="2.200" fill="#b82838"/><circle cx="86" cy="31" r="2.600" fill="#c02a3a"/><circle cx="4" cy="40" r="1.800" fill="#b82838"/><circle cx="68" cy="26" r="1.500" fill="#a02434"/></g></svg></div><svg class="abs" style="left:235px;top:28px" width="100" height="100" viewBox="583 130 100 100">
<g fill="#9eb1c8" opacity=".7"><ellipse cx="640" cy="157.500" rx="16.400" ry="19"/><ellipse cx="614" cy="184" rx="16.500" ry="17.500" transform="rotate(-15 614 184)"/><ellipse cx="652.500" cy="202.500" rx="16.800" ry="17.600"/></g>
<path d="M637 173 Q634 190 628 206 M649 217 Q647 222 648 228 M611 198 Q613 204 612 210" stroke="#8a8f98" stroke-width=".7" fill="none"/>
<ellipse cx="636.600" cy="154.600" rx="16.400" ry="19" fill="#f6d31e"/><path d="M634 172.500 l6 0 l-1.500 3 l-3 0z" fill="#f0c818"/>
<g stroke="#f9e36a" stroke-width=".8" fill="none"><path d="M624 147 q3 -2 6 0 t6 0 t6 0 t6 0"/><path d="M622 157 q3 -2 6 0 t6 0 t6 0 t6 0 t4 0"/><path d="M626 166 q3 -2 6 0 t6 0 t6 0"/></g>
<ellipse cx="610.900" cy="181.300" rx="16.600" ry="17.400" fill="#ea2947" transform="rotate(-15 610.900 181.300)"/><path d="M612 197.500 l5.500 -1 l0 3.500 l-4 .5z" fill="#d8203c"/>
<g fill="#fff"><circle cx="601" cy="172" r="1.500"/><circle cx="609" cy="168" r="1.500"/><circle cx="617" cy="169" r="1.500"/><circle cx="598" cy="181" r="1.500"/><circle cx="606" cy="178" r="1.500"/><circle cx="614" cy="177" r="1.500"/><circle cx="622" cy="176" r="1.500"/><circle cx="601" cy="190" r="1.500"/><circle cx="609" cy="187" r="1.500"/><circle cx="617" cy="186" r="1.500"/><circle cx="624" cy="184" r="1.500"/><circle cx="613" cy="194" r="1.500"/><circle cx="620" cy="192" r="1.500"/></g>
<ellipse cx="649.100" cy="199.800" rx="16.800" ry="17.700" fill="#8ab4d8"/>
<path d="M650 193.500 l1.600 3.600 3.900.4 -2.900 2.700 .8 3.900 -3.400 -2 -3.400 2 .8 -3.900 -2.900 -2.700 3.900 -.4z" fill="#fff"/>
</svg></div></div>
<div class="abs" style="left:0;top:558px;width:816px;height:29px;background:linear-gradient(#f4f4f4,#e9e9e9);border-top:1px solid #d2d2d2"></div>
<svg class="abs" style="left:20px;top:571px" width="9" height="8" viewBox="0 0 9 8"><rect x=".6" y=".6" width="7.800" height="6.800" fill="#fff" stroke="#3a3a3a" stroke-width="1.200"/><rect x="3" y="3" width="3" height="3" fill="#3a3a3a"/></svg>
<div class="track" style="left:38px;top:573.500px;width:83px;background:#d9d9d9"></div>
<div class="track" style="left:38px;top:573.500px;width:63px;background:#c9c9c9"></div>
<div class="knob" style="left:95.500px;top:569.500px"></div>
<svg class="abs" style="left:130.500px;top:568.500px" width="15" height="12" viewBox="0 0 15 12"><rect x=".8" y=".8" width="13.400" height="10.400" fill="#fff" stroke="#333" stroke-width="1.600"/><circle cx="7.500" cy="4.800" r="1.800" fill="#333"/><path d="M3.500 10.500q4-5.500 8 0z" fill="#333"/></svg>
<svg class="abs" style="left:168px;top:566px" width="17" height="17" viewBox="0 0 17 17"><circle cx="6.800" cy="6.800" r="5" fill="none" stroke="#3a3a3a" stroke-width="1.800"/><path d="M10.600 10.600l5 5" stroke="#3a3a3a" stroke-width="2.600" stroke-linecap="round"/><path d="M4.500 6.800h4.600M6.800 4.500v4.600" stroke="#3a3a3a" stroke-width="1.200"/></svg>
<div class="lbl" style="left:293.400px;top:568.500px;font-size:10.150px;color:#5a5a5a">Page: 600 x 800 pixel, Photos: 20</div>
<div class="abs" style="left:487px;top:573.500px;width:7px;height:2px;background:#3a3a3a"></div>
<div class="track" style="left:502px;top:573.500px;width:82px;background:#dcdcdc"></div>
<div class="knob" style="left:501.500px;top:569.500px"></div>
<svg class="abs" style="left:590px;top:570px" width="9" height="9" viewBox="0 0 9 9"><path d="M0 4.500h9M4.500 0v9" stroke="#3a3a3a" stroke-width="1.900"/></svg>
 <div id="right"><div class="abs" style="left:0;top:0;width:109px;height:29px;background:#ececec;border-top:1px solid #dcdcdc"></div>
<div class="abs" style="left:109px;top:0;width:103px;height:29px;background:linear-gradient(#53b3f2,#2b98e8)"></div>
<svg class="abs" style="left:47px;top:7.200px" width="15.500" height="14.800" viewBox="0 0 17 16" preserveAspectRatio="none"><g fill="#686868"><rect x=".5" y=".5" width="16" height="5"/><rect x=".5" y="7" width="9.500" height="8.500"/><rect x="11.500" y="7" width="5" height="8.500"/></g></svg>
<svg class="abs" style="left:149px;top:5px" width="20" height="20" viewBox="0 0 20 20"><path d="M9.500 6.500l3-2.500 7 9.500-3 2.500z" fill="#fff"/><path d="M8.200 5.600l2.500-2.100 1.300 1.600-2.500 2.100z" fill="#dff1ff"/><g fill="#fff"><circle cx="4" cy="4.500" r="1.100"/><circle cx="7.500" cy="10" r="1"/><circle cx="13.500" cy="2.500" r="1"/><circle cx="4.500" cy="8.500" r=".7"/></g></svg>
<div class="abs" style="left:34.5px;top:48.5px;width:150px;height:16px;border-radius:4px;background:#fbfbfb;box-shadow:0 0 0 .5px #e9e9e9"></div>
<div class="abs" style="left:34.5px;top:48.5px;width:75px;height:16px;border-radius:4px 0 0 4px;background:#ececec;border-right:1px solid #dedede"></div>
<div class="lbl" style="left:34.5px;top:48.8px;width:75px;text-align:center;font-size:11.700px">Border</div>
<div class="lbl" style="left:109.5px;top:48.8px;width:75px;text-align:center;font-size:11.700px">Decoration</div>
<div class="lbl" style="right:156.5px;top:85.500px;font-size:10.8px;color:#2a2a2a">Color:</div>
<div class="abs" style="left:62.0px;top:83.7px;width:40px;height:19px;background:#ececec;border:1px solid #bdbdbd"><div class="abs" style="left:3.500px;top:3.500px;width:31px;height:10px;background:#fff;border:1px solid #8a8a8a"></div></div>
<div class="lbl" style="right:156.5px;top:111.0px;font-size:10.8px;color:#2a2a2a">Width:</div>
<div class="track" style="left:62.0px;top:116.5px;width:90px;"></div><div class="track" style="left:62.0px;top:116.5px;width:20.6px;background:#cfcfcf"></div><div class="knob" style="left:77.1px;top:112.5px;"></div>
<div class="num" style="left:161.0px;top:110.5px">2</div><svg class="abs" style="left:186.0px;top:110.0px" width="10" height="16" viewBox="0 0 10 16"><rect x=".5" y=".5" width="9" height="15" rx="4.500" fill="#fff" stroke="#e6e6e6" stroke-width="1"/><path d="M2.500 6.200L5 3.800l2.500 2.400M2.500 9.800L5 12.200l2.500-2.400" fill="none" stroke="#3c3c3c" stroke-width="1.300" stroke-linecap="round" stroke-linejoin="round"/></svg>
<div class="lbl" style="right:156.5px;top:134px;font-size:10.8px;color:#2a2a2a">Corner:</div>
<div class="track" style="left:62.0px;top:140.5px;width:90px;"></div><div class="track" style="left:62.0px;top:140.5px;width:5.5px;background:#cfcfcf"></div><div class="knob" style="left:62.0px;top:136.5px;"></div>
<div class="num" style="left:161.0px;top:134.5px">0</div><svg class="abs" style="left:186.0px;top:134.0px" width="10" height="16" viewBox="0 0 10 16"><rect x=".5" y=".5" width="9" height="15" rx="4.500" fill="#fff" stroke="#e6e6e6" stroke-width="1"/><path d="M2.500 6.200L5 3.800l2.500 2.400M2.500 9.800L5 12.200l2.500-2.400" fill="none" stroke="#3c3c3c" stroke-width="1.300" stroke-linecap="round" stroke-linejoin="round"/></svg>
<div class="sep" style="top:160.5px"></div>
<div class="lbl" style="left:6.8px;top:167.6px;font-weight:700;font-size:11.400px;color:#262626">Shadow</div>
<div class="abs" style="left:23.2px;top:190.8px;width:9.500px;height:9.500px;border-radius:2px;background:#fff;box-shadow:0 0 0 .7px #c4c4c4"></div>
<div class="lbl" style="left:36.8px;top:192.5px;font-size:10.400px;color:#3a3a3a">Shadow</div>
<div class="lbl" style="right:156.5px;top:213.400px;font-size:10.8px;color:#2a2a2a">Color:</div>
<div class="abs" style="left:62.0px;top:212.0px;width:40px;height:19px;background:#f1f1f1;border:1px solid #d0d0d0"><div class="abs" style="left:4px;top:4px;width:30px;height:9px;background:#000"></div></div>
<div class="abs" style="left:133.0px;top:212.5px;width:18px;height:18px;border-radius:50%;background:#fff;box-shadow:0 0 0 .5px rgba(0,0,0,.05),0 .5px 2px rgba(0,0,0,.12)"></div>
<div class="abs" style="left:144.3px;top:213.5px;width:5px;height:5px;border-radius:50%;background:#1c1c1c"></div>
<div class="num dis" style="left:161.0px;top:214.0px">45</div><svg class="abs" style="left:186.0px;top:213.5px" width="10" height="16" viewBox="0 0 10 16"><rect x=".5" y=".5" width="9" height="15" rx="4.500" fill="#fff" stroke="#e6e6e6" stroke-width="1"/><path d="M2.500 6.200L5 3.800l2.500 2.400M2.500 9.800L5 12.200l2.500-2.400" fill="none" stroke="#d9d9d9" stroke-width="1.300" stroke-linecap="round" stroke-linejoin="round"/></svg>
<div class="lbl" style="right:156.5px;top:241.5px;font-size:10.8px;color:#2a2a2a">Blur:</div>
<div class="track" style="left:62.0px;top:247.0px;width:90px;background:#f0f0f0"></div><div class="knob" style="left:73.0px;top:243.0px;box-shadow:0 0 0 0.5px rgba(0,0,0,.04),0 0.5px 1.500px rgba(0,0,0,.1)"></div>
<div class="num dis" style="left:161.0px;top:241.0px">15</div><svg class="abs" style="left:186.0px;top:240.5px" width="10" height="16" viewBox="0 0 10 16"><rect x=".5" y=".5" width="9" height="15" rx="4.500" fill="#fff" stroke="#e6e6e6" stroke-width="1"/><path d="M2.500 6.200L5 3.800l2.500 2.400M2.500 9.800L5 12.200l2.500-2.400" fill="none" stroke="#d9d9d9" stroke-width="1.300" stroke-linecap="round" stroke-linejoin="round"/></svg>
<div class="lbl" style="right:156.5px;top:268.3px;font-size:10.8px;color:#2a2a2a">Alpha:</div>
<div class="track" style="left:62.0px;top:273.8px;width:90px;background:#f0f0f0"></div><div class="knob" style="left:101.3px;top:269.8px;box-shadow:0 0 0 0.5px rgba(0,0,0,.04),0 0.5px 1.500px rgba(0,0,0,.1)"></div>
<div class="num dis" style="left:161.0px;top:267.8px">50</div><svg class="abs" style="left:186.0px;top:267.3px" width="10" height="16" viewBox="0 0 10 16"><rect x=".5" y=".5" width="9" height="15" rx="4.500" fill="#fff" stroke="#e6e6e6" stroke-width="1"/><path d="M2.500 6.200L5 3.800l2.500 2.400M2.500 9.800L5 12.200l2.500-2.400" fill="none" stroke="#d9d9d9" stroke-width="1.300" stroke-linecap="round" stroke-linejoin="round"/></svg>
<div class="lbl" style="right:156.5px;top:293.500px;font-size:10.8px;color:#2a2a2a">Offset:</div>
<div class="track" style="left:62.0px;top:299.5px;width:90px;background:#f0f0f0"></div><div class="knob" style="left:69.2px;top:295.5px;box-shadow:0 0 0 0.5px rgba(0,0,0,.04),0 0.5px 1.500px rgba(0,0,0,.1)"></div>
<div class="num dis" style="left:161.0px;top:293.5px">10</div><svg class="abs" style="left:186.0px;top:293.0px" width="10" height="16" viewBox="0 0 10 16"><rect x=".5" y=".5" width="9" height="15" rx="4.500" fill="#fff" stroke="#e6e6e6" stroke-width="1"/><path d="M2.500 6.200L5 3.800l2.500 2.400M2.500 9.800L5 12.200l2.500-2.400" fill="none" stroke="#d9d9d9" stroke-width="1.300" stroke-linecap="round" stroke-linejoin="round"/></svg>
<div class="sep" style="top:321.700px"></div>
<div class="lbl" style="left:6.8px;top:330.0px;font-weight:700;font-size:11.400px;color:#262626">Image Effect</div>
<div class="abs" style="left:74.4px;top:356.0px;width:63px;height:61px;border-radius:3px;background:#f5f5f5;box-shadow:0 0 0 .7px #e2e2e2"></div>
<svg class="abs" style="left:79.8px;top:360.0px" width="52.500" height="52.500" viewBox="0 0 100 100"><defs><linearGradient id="sf" x1="0" y1="0" x2="0" y2="1"><stop offset="0" stop-color="#3a6fd0"/><stop offset="1" stop-color="#7a9ce4"/></linearGradient></defs><rect width="100" height="100" fill="url(#sf)"/><path d="M49 70 L53 70 L53 100 L48 100Z" fill="#3f8a2a"/><path d="M52 84 Q64 78 70 88 Q60 94 52 88Z" fill="#4a9a30"/><g fill="#e9b70c"><path d="M52 48 L47 24 L52 6 L57 24Z" transform="rotate(0 52 48)"/><path d="M52 48 L47 24 L52 6 L57 24Z" transform="rotate(20 52 48)"/><path d="M52 48 L47 24 L52 6 L57 24Z" transform="rotate(40 52 48)"/><path d="M52 48 L47 24 L52 6 L57 24Z" transform="rotate(60 52 48)"/><path d="M52 48 L47 24 L52 6 L57 24Z" transform="rotate(80 52 48)"/><path d="M52 48 L47 24 L52 6 L57 24Z" transform="rotate(100 52 48)"/><path d="M52 48 L47 24 L52 6 L57 24Z" transform="rotate(120 52 48)"/><path d="M52 48 L47 24 L52 6 L57 24Z" transform="rotate(140 52 48)"/><path d="M52 48 L47 24 L52 6 L57 24Z" transform="rotate(160 52 48)"/><path d="M52 48 L47 24 L52 6 L57 24Z" transform="rotate(180 52 48)"/><path d="M52 48 L47 24 L52 6 L57 24Z" transform="rotate(200 52 48)"/><path d="M52 48 L47 24 L52 6 L57 24Z" transform="rotate(220 52 48)"/><path d="M52 48 L47 24 L52 6 L57 24Z" transform="rotate(240 52 48)"/><path d="M52 48 L47 24 L52 6 L57 24Z" transform="rotate(260 52 48)"/><path d="M52 48 L47 24 L52 6 L57 24Z" transform="rotate(280 52 48)"/><path d="M52 48 L47 24 L52 6 L57 24Z" transform="rotate(300 52 48)"/><path d="M52 48 L47 24 L52 6 L57 24Z" transform="rotate(320 52 48)"/><path d="M52 48 L47 24 L52 6 L57 24Z" transform="rotate(340 52 48)"/></g><g fill="#f8d822"><path d="M52 48 L48 26 L52 11 L56 26Z" transform="rotate(10 52 48)"/><path d="M52 48 L48 26 L52 11 L56 26Z" transform="rotate(30 52 48)"/><path d="M52 48 L48 26 L52 11 L56 26Z" transform="rotate(50 52 48)"/><path d="M52 48 L48 26 L52 11 L56 26Z" transform="rotate(70 52 48)"/><path d="M52 48 L48 26 L52 11 L56 26Z" transform="rotate(90 52 48)"/><path d="M52 48 L48 26 L52 11 L56 26Z" transform="rotate(110 52 48)"/><path d="M52 48 L48 26 L52 11 L56 26Z" transform="rotate(130 52 48)"/><path d="M52 48 L48 26 L52 11 L56 26Z" transform="rotate(150 52 48)"/><path d="M52 48 L48 26 L52 11 L56 26Z" transform="rotate(170 52 48)"/><path d="M52 48 L48 26 L52 11 L56 26Z" transform="rotate(190 52 48)"/><path d="M52 48 L48 26 L52 11 L56 26Z" transform="rotate(210 52 48)"/><path d="M52 48 L48 26 L52 11 L56 26Z" transform="rotate(230 52 48)"/><path d="M52 48 L48 26 L52 11 L56 26Z" transform="rotate(250 52 48)"/><path d="M52 48 L48 26 L52 11 L56 26Z" transform="rotate(270 52 48)"/><path d="M52 48 L48 26 L52 11 L56 26Z" transform="rotate(290 52 48)"/><path d="M52 48 L48 26 L52 11 L56 26Z" transform="rotate(310 52 48)"/><path d="M52 48 L48 26 L52 11 L56 26Z" transform="rotate(330 52 48)"/><path d="M52 48 L48 26 L52 11 L56 26Z" transform="rotate(350 52 48)"/></g><circle cx="52" cy="48" r="14" fill="#b07014"/><circle cx="52" cy="48" r="9.500" fill="#6a4210"/></svg>
<div class="sep" style="top:429.0px"></div>
<div class="abs" style="left:44.5px;top:445.0px;width:123px;height:16.500px;border-radius:4px;background:#fff;box-shadow:0 0 0 .5px #e8e8e8,0 .5px .8px rgba(0,0,0,.05);font-size:11.700px;line-height:16.500px;text-align:center;color:#333">Reset settings</div></div>
</div>
<div id="dlg"><div class="abs" style="left:0;top:0;width:436px;height:24px;background:#f9f9f9;border-bottom:1px solid #dddddd"></div>
<div class="tl" style="left:6.300px;top:6.200px;background:#fb4a48;border-color:#e0443e"></div>
<div class="tl" style="left:23.500px;top:6.200px;background:#dedede;border-color:#d0d0d0"></div>
<div class="tl" style="left:40.500px;top:6.200px;background:#dedede;border-color:#d0d0d0"></div>
<div class="abs" style="left:0;top:4.200px;width:436px;text-align:center;font-size:11.700px;font-weight:700;color:#2c2c2c;line-height:14px">Preferences</div>
<div class="cb" style="top:41.0px"></div><div class="ct" style="top:39.6px">Do not remind me after exporting images successfully.</div>
<div class="cb" style="top:61.4px"></div><div class="ct" style="top:60.0px">Do not show floating pane when selecting photo object in collage.</div>
<div class="cb" style="top:81.8px"></div><div class="ct" style="top:80.4px">Do not show floating pane when selecting text object in collage.</div>
<div class="cb" style="top:102.1px"></div><div class="ct" style="top:100.7px">Do not ask me when removing images used in collage.</div>
<div class="cb" style="top:122.9px"></div><div class="ct" style="top:121.5px">Do not ask me when switching back to Auto Mode.</div>
<div class="cb" style="top:144.4px"></div><div class="ct" style="top:143.0px">Do not ask me when deleting template.</div>
<div class="abs" style="left:0;top:172.300px;width:436px;height:1px;background:#d8d8d8"></div>
<div class="abs" style="left:348.500px;top:186.500px;width:69px;height:15.500px;border-radius:4px;background:#efefef;box-shadow:0 0 0 .5px #e0e0e0,0 .5px .8px rgba(0,0,0,.06);font-size:11.500px;line-height:15.500px;text-align:center;color:#2a2a2a">OK</div></div>
<div id="dock"><svg width="0" height="0" style="position:absolute"><defs>
<linearGradient id="dFi" x1="0" y1="0" x2="0" y2="1"><stop offset="0" stop-color="#3fb0fb"/><stop offset="1" stop-color="#1a73e8"/></linearGradient>
<linearGradient id="dMs" x1="0" y1="0" x2="0" y2="1"><stop offset="0" stop-color="#62f47c"/><stop offset="1" stop-color="#0cbd2a"/></linearGradient>
<linearGradient id="dMl" x1="0" y1="0" x2="0" y2="1"><stop offset="0" stop-color="#1e6ef0"/><stop offset="1" stop-color="#28b6fa"/></linearGradient>
<linearGradient id="dMu" x1="0" y1="0" x2="0" y2="1"><stop offset="0" stop-color="#fb5c74"/><stop offset="1" stop-color="#fa233b"/></linearGradient>
<linearGradient id="dPo" x1="0" y1="0" x2="0" y2="1"><stop offset="0" stop-color="#cf68f2"/><stop offset="1" stop-color="#6f20c4"/></linearGradient>
<linearGradient id="dAs" x1="0" y1="0" x2="0" y2="1"><stop offset="0" stop-color="#1cb7fb"/><stop offset="1" stop-color="#1a6cf0"/></linearGradient>
<linearGradient id="dSa" x1="0" y1="0" x2="0" y2="1"><stop offset="0" stop-color="#1fb3f8"/><stop offset="1" stop-color="#1d67d8"/></linearGradient>
<linearGradient id="dSp" x1="0" y1="0" x2="0" y2="1"><stop offset="0" stop-color="#dcdee0"/><stop offset="1" stop-color="#808388"/></linearGradient>
<linearGradient id="dFo" x1="0" y1="0" x2="0" y2="1"><stop offset="0" stop-color="#78ccf9"/><stop offset="1" stop-color="#5bb8f2"/></linearGradient>
<linearGradient id="dTr" x1="0" y1="0" x2="1" y2="0"><stop offset="0" stop-color="#e4e4e6"/><stop offset=".5" stop-color="#fafafa"/><stop offset="1" stop-color="#dcdcde"/></linearGradient>
<clipPath id="dClip"><rect x="1" y="1" width="62" height="62" rx="14.500"/></clipPath>
</defs></svg>
<svg class="abs" style="left:6.0px;top:7.5px" width="32" height="32" viewBox="0 0 64 64"><g clip-path="url(#dClip)"><rect width="64" height="64" fill="url(#dFi)"/><path d="M36 0 L64 0 L64 64 L39 64 Q34 50 33 36 L39 36 Q37 18 41 0Z" fill="#e9eef4"/><path d="M36 0 Q31 18 33 38 L39 38" fill="none" stroke="#1a4f9e" stroke-width="1.600"/><path d="M15 44 Q32 56 49 43" fill="none" stroke="#173c78" stroke-width="2.600" stroke-linecap="round"/><path d="M19 19.500v5M47 19.500v5" stroke="#173c78" stroke-width="2.600" stroke-linecap="round"/></g></svg>
<svg class="abs" style="left:46.5px;top:7.5px" width="32" height="32" viewBox="0 0 64 64"><rect x="1" y="1" width="62" height="62" rx="14.500" fill="#ecedf1" /><rect x="10.5" y="10.5" width="11.500" height="11.500" rx="2.800" fill="#4cd964"/><rect x="26.2" y="10.5" width="11.500" height="11.500" rx="2.800" fill="#f7c51e"/><rect x="41.9" y="10.5" width="11.500" height="11.500" rx="2.800" fill="#f5921b"/><rect x="10.5" y="26.2" width="11.500" height="11.500" rx="2.800" fill="#e8202a"/><rect x="26.2" y="26.2" width="11.500" height="11.500" rx="2.800" fill="#a0a4a8"/><rect x="41.9" y="26.2" width="11.500" height="11.500" rx="2.800" fill="#f0436a"/><rect x="10.5" y="41.9" width="11.500" height="11.500" rx="2.800" fill="#b04ae0"/><rect x="26.2" y="41.9" width="11.500" height="11.500" rx="2.800" fill="#2a9af0"/><rect x="41.9" y="41.9" width="11.500" height="11.500" rx="2.800" fill="#30c8a0"/></svg>
<svg class="abs" style="left:87.0px;top:7.5px" width="32" height="32" viewBox="0 0 64 64"><rect x="1" y="1" width="62" height="62" rx="14.500" fill="#f4f5f7" /><circle cx="32" cy="32" r="25.500" fill="url(#dSa)"/><circle cx="32" cy="32" r="25.500" fill="none" stroke="#e9eef3" stroke-width="2"/><path d="M48 16 L35.500 35.500 L28.500 28.500Z" fill="#f4483a"/><path d="M16 48 L28.500 28.500 L35.500 35.500Z" fill="#f4f4f4"/></svg>
<svg class="abs" style="left:128.0px;top:7.5px" width="32" height="32" viewBox="0 0 64 64"><rect x="1" y="1" width="62" height="62" rx="14.500" fill="url(#dMs)" /><ellipse cx="32" cy="30" rx="19" ry="15.500" fill="#f1f8f1"/><path d="M19 40 Q19 48 14 50 Q23 51 28 44Z" fill="#eef6ee"/></svg>
<svg class="abs" style="left:168.5px;top:7.5px" width="32" height="32" viewBox="0 0 64 64"><rect x="1" y="1" width="62" height="62" rx="14.500" fill="url(#dMl)" /><rect x="10.500" y="18.500" width="43" height="27" rx="3.500" fill="#eef1f4"/><path d="M12 21 L32 36 L52 21" fill="none" stroke="#b9bcc2" stroke-width="1.800"/><path d="M12 43.500 L25 32.500 M52 43.500 L39 32.500" fill="none" stroke="#c9ccd2" stroke-width="1.400"/></svg>
<svg class="abs" style="left:209.5px;top:7.5px" width="32" height="32" viewBox="0 0 64 64"><g clip-path="url(#dClip)"><rect width="64" height="64" fill="#e4efc8"/><rect x="0" y="0" width="12" height="64" fill="#f6e282"/><path d="M0 38 L64 32 L64 40 L0 47Z" fill="#f6b8c8" opacity=".7"/><path d="M28 0 Q34 34 64 38 L64 0Z" fill="#f8f8f2"/><path d="M36 0 Q40 26 64 30 L64 0Z" fill="#86cc60"/><path d="M46 0 Q48 16 64 20 L64 0Z" fill="#f4f6ee"/><path d="M54 0 Q56 8 64 10 L64 0Z" fill="#98d470"/><rect x="12" y="40" width="12" height="24" fill="#f8f8f6"/><rect x="14.500" y="0" width="5.500" height="36" fill="#1b7cf2"/><circle cx="17" cy="38" r="9" fill="#fafafa"/><circle cx="17" cy="38" r="6" fill="#1b7cf2"/><path d="M38 44 L58 44 L58 54 Q52 58 48 62 Q44 58 38 54Z" fill="#2f62c8"/><rect x="38" y="43" width="20" height="4" fill="#e84a4a"/><rect x="41.500" y="49" width="13" height="5" fill="#f4f4f4"/></g></svg>
<svg class="abs" style="left:250.0px;top:7.5px" width="32" height="32" viewBox="0 0 64 64"><rect x="1" y="1" width="62" height="62" rx="14.500" fill="#fbfbfb" /><ellipse cx="32" cy="18.500" rx="7.500" ry="11.500" fill="#f59a1e" opacity=".85" transform="rotate(0 32 32)"/><ellipse cx="32" cy="18.500" rx="7.500" ry="11.500" fill="#f2d022" opacity=".85" transform="rotate(45 32 32)"/><ellipse cx="32" cy="18.500" rx="7.500" ry="11.500" fill="#a6d43e" opacity=".85" transform="rotate(90 32 32)"/><ellipse cx="32" cy="18.500" rx="7.500" ry="11.500" fill="#4ec4a0" opacity=".85" transform="rotate(135 32 32)"/><ellipse cx="32" cy="18.500" rx="7.500" ry="11.500" fill="#4a92e4" opacity=".85" transform="rotate(180 32 32)"/><ellipse cx="32" cy="18.500" rx="7.500" ry="11.500" fill="#8f6cd6" opacity=".85" transform="rotate(225 32 32)"/><ellipse cx="32" cy="18.500" rx="7.500" ry="11.500" fill="#d85aa4" opacity=".85" transform="rotate(270 32 32)"/><ellipse cx="32" cy="18.500" rx="7.500" ry="11.500" fill="#f0503e" opacity=".85" transform="rotate(315 32 32)"/></svg>
<svg class="abs" style="left:290.5px;top:7.5px" width="32" height="32" viewBox="0 0 64 64"><rect x="1" y="1" width="62" height="62" rx="14.500" fill="url(#dMs)" /><rect x="11" y="21.500" width="29" height="22" rx="5.500" fill="#eef6ee"/><path d="M43 30 L53 23 L53 42 L43 35Z" fill="#e6f0e6"/></svg>
<svg class="abs" style="left:331.0px;top:7.5px" width="32" height="32" viewBox="0 0 64 64"><g clip-path="url(#dClip)"><rect width="64" height="64" fill="#fbfbfb"/><rect width="64" height="19.500" fill="#f2453d"/></g><text x="32" y="15.500" font-size="12" font-weight="700" fill="#fff" text-anchor="middle" font-family="Liberation Sans, sans-serif">JAN</text><text x="32" y="54" font-size="37" fill="#2a2a2a" text-anchor="middle" font-family="Liberation Sans, sans-serif">5</text></svg>
<svg class="abs" style="left:372.0px;top:7.5px" width="32" height="32" viewBox="0 0 64 64"><rect x="1" y="1" width="62" height="62" rx="14.500" fill="#b98f56" /><rect x="1" y="1" width="8" height="62" fill="#a87c46" clip-path="url(#dClip)"/><circle cx="32" cy="32" r="15" fill="none" stroke="#a07842" stroke-width="2.500"/><circle cx="32" cy="27.500" r="6" fill="#a07842"/><path d="M21 42 Q32 30 43 42 Q32 50 21 42Z" fill="#a07842"/><g><rect x="60" y="14" width="3.500" height="10" rx="1.500" fill="#d0a86a"/><rect x="60" y="27" width="3.500" height="10" rx="1.500" fill="#7ab86a"/><rect x="60" y="40" width="3.500" height="10" rx="1.500" fill="#9a9a9a"/></g></svg>
<svg class="abs" style="left:412.5px;top:7.5px" width="32" height="32" viewBox="0 0 64 64"><rect x="1" y="1" width="62" height="62" rx="14.500" fill="#fbfbfb" /><circle cx="13.500" cy="17" r="4" fill="#3a8df4"/><circle cx="13.500" cy="32" r="4" fill="#ee4a5a"/><circle cx="13.500" cy="47" r="4" fill="#f4a42a"/><path d="M23 17h32M23 32h32M23 47h32" stroke="#d4d4d8" stroke-width="2"/></svg>
<svg class="abs" style="left:453.5px;top:7.5px" width="32" height="32" viewBox="0 0 64 64"><g clip-path="url(#dClip)"><rect width="64" height="64" fill="#f7f5f0"/><rect width="64" height="18" fill="#fbd130"/><path d="M0 18h64" stroke="#e0b820" stroke-width="1"/><path d="M0 31h64M0 43h64M0 55h64" stroke="#dcdad4" stroke-width="1.500"/></g></svg>
<svg class="abs" style="left:494.0px;top:7.5px" width="32" height="32" viewBox="0 0 64 64"><rect x="1" y="1" width="62" height="62" rx="14.500" fill="#1c1f21" /><path transform="translate(8 18.500) scale(.112)" fill="#f0f0f0" d="M150 68c-1 1-20 11-20 35 0 27 24 37 25 37 0 1-4 13-12 25-8 11-16 22-28 22s-15-7-29-7c-14 0-19 7-30 7s-19-10-28-23C18 149 9 124 9 100c0-38 25-58 49-58 13 0 24 8 32 8 8 0 20-9 35-9 6 0 26 1 40 20zM105 32c6-7 10-17 10-27 0-1 0-3-1-4-10 0-22 7-29 15-6 6-11 16-11 26 0 2 0 3 1 4h3c9 0 20-6 27-14z"/><text x="43" y="41" font-size="25" font-weight="400" fill="#f0f0f0" text-anchor="middle" font-family="Liberation Sans, sans-serif" stroke="#f0f0f0" stroke-width=".5">tv</text></svg>
<svg class="abs" style="left:534.5px;top:7.5px" width="32" height="32" viewBox="0 0 64 64"><rect x="1" y="1" width="62" height="62" rx="14.500" fill="url(#dMu)" /><path d="M26 18 L46 13.500 L46 40 a6.500 5.500 0 1 1 -3.500 -5 L42.500 21.500 L29.500 24.500 L29.500 44 a6.500 5.500 0 1 1 -3.500 -5Z" fill="#fff"/></svg>
<svg class="abs" style="left:575.0px;top:7.5px" width="32" height="32" viewBox="0 0 64 64"><rect x="1" y="1" width="62" height="62" rx="14.500" fill="url(#dPo)" /><circle cx="32" cy="28" r="17.500" fill="none" stroke="#f4e8fc" stroke-width="2.400"/><circle cx="32" cy="28" r="10.500" fill="none" stroke="#f4e8fc" stroke-width="2.400"/><rect x="24" y="34" width="16" height="14" fill="url(#dPo)"/><circle cx="32" cy="27.500" r="4.600" fill="#fff"/><path d="M28 37 q4 -3 8 0 l-1.500 14 q-2.500 2.500 -5 0z" fill="#fff"/></svg>
<svg class="abs" style="left:615.5px;top:7.5px" width="32" height="32" viewBox="0 0 64 64"><rect x="1" y="1" width="62" height="62" rx="14.500" fill="#fbfbfb" /><path d="M14 14 L28 14 L50 38 L50 50 L36 50 L14 26Z" fill="#f2385a"/><path d="M14 32 L32 50 L14 50Z" fill="#f7909e"/><path d="M32 14 L50 14 L50 32Z" fill="#f7909e"/></svg>
<svg class="abs" style="left:656.0px;top:7.5px" width="32" height="32" viewBox="0 0 64 64"><rect x="1" y="1" width="62" height="62" rx="14.500" fill="url(#dAs)" /><g stroke="#fff" stroke-width="4.600" stroke-linecap="round" fill="none"><path d="M32 15 L19.500 38"/><path d="M29 15.500 L43.500 42"/><path d="M13 38 H35"/><path d="M41 38 H51"/><path d="M17 43 L15.500 46"/></g></svg>
<svg class="abs" style="left:698.8px;top:9.2px" width="28.500" height="28" viewBox="0 0 64 64"><rect x="2" y="2" width="60" height="60" rx="12" fill="#1f1f21" stroke="#55555a" stroke-width="3"/><path d="M13 16 l6 4 l-6 4" fill="none" stroke="#f0f0f0" stroke-width="2.400"/><path d="M23 25.500 h9" stroke="#f0f0f0" stroke-width="2.400"/></svg>
<svg class="abs" style="left:737.5px;top:7.5px" width="32" height="32" viewBox="0 0 64 64"><rect x="1" y="1" width="62" height="62" rx="14.500" fill="url(#dSp)" /><circle cx="32" cy="32" r="24" fill="#6a6d72" stroke="#34363a" stroke-width="4.500"/><circle cx="32" cy="32" r="15.500" fill="#8c8f94" stroke="#3a3c40" stroke-width="3"/><circle cx="32" cy="32" r="4.500" fill="#3a3c40"/><g stroke="#34363a" stroke-width="3.500"><path d="M32 32 L32 14"/><path d="M32 32 L47.500 41"/><path d="M32 32 L16.500 41"/></g></svg>
<svg class="abs" style="left:776.5px;top:5.7px" width="35" height="35" viewBox="0 0 64 64"><circle cx="32" cy="32" r="31.500" fill="#f6f9fc"/><circle cx="32" cy="32" r="29" fill="#409ce6"/><path d="M3.500 38 A29 29 0 0 0 60.500 38Z" fill="#3b8fdc"/><path d="M7 40 L20 19 L26 29 M23 40 L38 11 L55 40 M4 40.500 H60" fill="none" stroke="#fff" stroke-width="3.200" stroke-linejoin="miter"/></svg>
<svg class="abs" style="left:816.0px;top:3.5px" width="36.500" height="36.500" viewBox="0 0 64 64"><clipPath id="apc"><circle cx="32" cy="32" r="31"/></clipPath><g clip-path="url(#apc)"><path d="M32 32 L17.45 4.63 A31 31 0 0 1 62.32 25.55 Z" fill="#c640d2"/><path d="M32 32 L62.32 25.55 A31 31 0 0 1 60.74 43.61 Z" fill="#3a3236"/><path d="M32 32 L60.74 43.61 A31 31 0 0 1 36.31 62.70 Z" fill="#f98c72"/><path d="M32 32 L36.31 62.70 A31 31 0 0 1 6.30 49.33 Z" fill="#f5d326"/><path d="M32 32 L6.30 49.33 A31 31 0 0 1 3.26 20.39 Z" fill="#b6e032"/><path d="M32 32 L3.26 20.39 A31 31 0 0 1 17.45 4.63 Z" fill="#3c9ce2"/><path d="M14 6 L50 24" stroke="#f4f4f4" stroke-width="1.200"/><path d="M12 26 L14 52" stroke="#f4f4f4" stroke-width="1"/></g><polygon points="40.0,8.8 56.2,25.0 50.3,47.3 28.0,53.2 11.8,37.0 17.7,14.7" fill="#1e1e20"/><circle cx="33.500" cy="31" r="18" fill="#101012"/><circle cx="33.500" cy="31" r="12" fill="#2a1218"/><ellipse cx="27" cy="23.500" rx="5.500" ry="3.500" fill="#4a9a3a" opacity=".8" transform="rotate(-30 27 23.500)"/><ellipse cx="38.500" cy="38" rx="4" ry="2.500" fill="#d8407a" opacity=".85" transform="rotate(-35 38.500 38)"/></svg>
<div class="abs" style="left:864px;top:8px;width:1px;height:36px;background:#a9a9ac"></div>
<svg class="abs" style="left:875.0px;top:3.5px" width="37.500" height="38" viewBox="0 0 64 64" preserveAspectRatio="none"><path d="M3 14 Q3 9 8 9 L22 9 Q25 9 27 12 L29 15 L56 15 Q61 15 61 20 L61 51 Q61 56 56 56 L8 56 Q3 56 3 51Z" fill="#3f9fe0"/><path d="M3 24 Q3 19 8 19 L56 19 Q61 19 61 24 L61 51 Q61 56 56 56 L8 56 Q3 56 3 51Z" fill="url(#dFo)"/><circle cx="32" cy="37.500" r="10.500" fill="#4aa6e6"/><path d="M32 31 v12 M27 38.500 l5 5 l5 -5" fill="none" stroke="#7cccf8" stroke-width="2.600" stroke-linecap="round" stroke-linejoin="round"/></svg>
<svg class="abs" style="left:916.5px;top:5.0px" width="36" height="36" viewBox="0 0 64 64"><path d="M9 8 L55 8 L49 58 Q48 62 44 62 L20 62 Q16 62 15 58Z" fill="url(#dTr)" stroke="#c8c8cc" stroke-width="1"/><ellipse cx="32" cy="8.500" rx="23" ry="4.500" fill="#f1f1f3" stroke="#d0d0d4" stroke-width="1"/></svg>
<div class="dot" style="left:20.5px"></div>
<div class="dot" style="left:101.5px"></div>
<div class="dot" style="left:832.0px"></div></div>
</body></html>
